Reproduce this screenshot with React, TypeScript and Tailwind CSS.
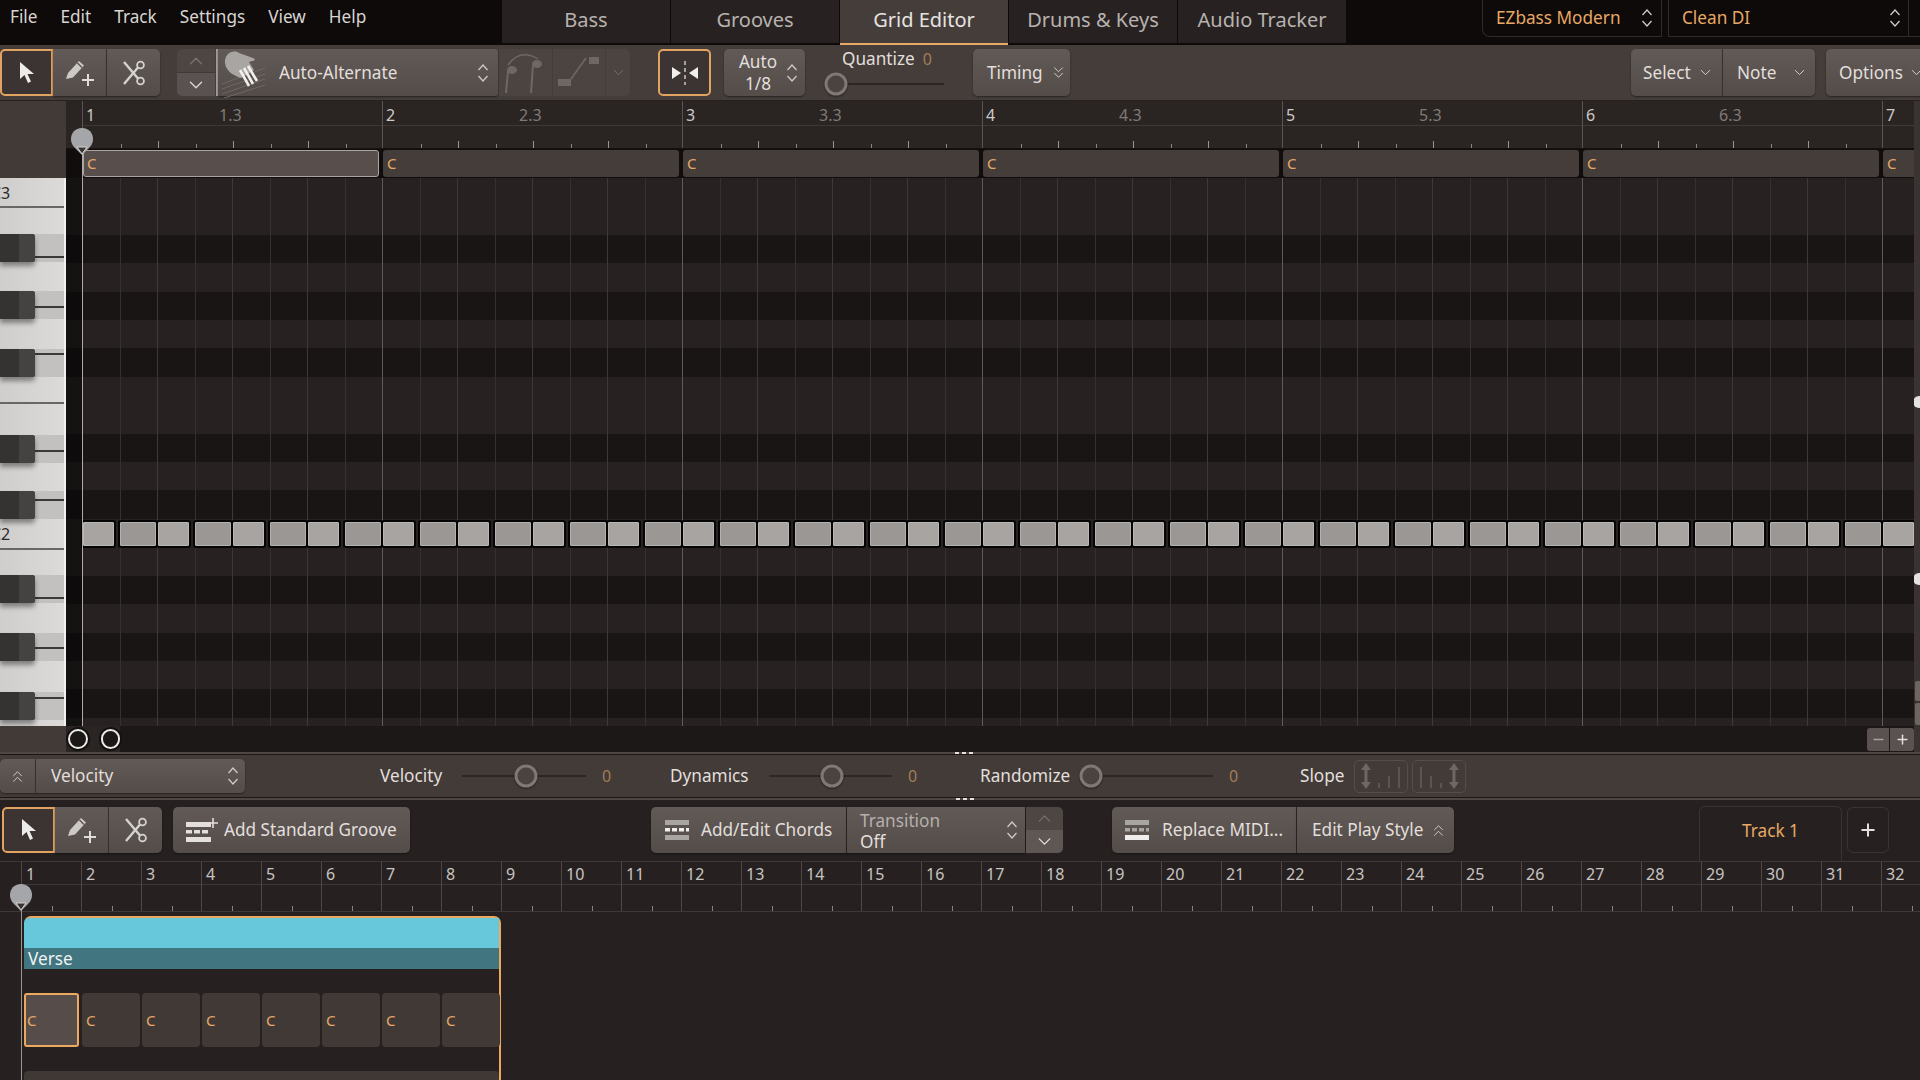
import { ChevronDown, ChevronUp, ChevronsDown, ChevronsUp, Minus, Plus } from "lucide-react";
import React from "react";

const ORANGE = "text-[#e8a866]";
const BTN = "bg-linear-to-b from-[#625a57] to-[#544c49] text-[#e2dfdc] shadow-[0_1px_2px_rgba(0,0,0,0.45)]";

function UpDown({ className = "" }: { className?: string }) {
  return (
    <svg width="12" height="20" viewBox="0 0 12 20" fill="none" stroke="#cfcac7" strokeWidth="1.3" className={className}>
      <path d="M1.5 7 L6 2 L10.5 7" />
      <path d="M1.5 13 L6 18 L10.5 13" />
    </svg>
  );
}

function Arrow() {
  return (
    <svg width="18" height="24" viewBox="0 0 18 24" fill="#eeeceb">
      <path d="M2 1 L2 18 L6.5 14 L10 22 L13 20.5 L9.5 13 L16 13 Z" />
    </svg>
  );
}

function PencilPlus() {
  return (
    <svg width="30" height="28" viewBox="0 0 30 28" fill="none">
      <path d="M1 20 L3 14 L14 2 L19 6.5 L8 18.5 Z" fill="#cdc9c6" />
      <path d="M12.5 4 L17 8.5" stroke="#5a5250" strokeWidth="1.2" />
      <path d="M23 15 V27 M17 21 H29" stroke="#e0dcd9" strokeWidth="2" />
    </svg>
  );
}

function ScissorsIcon() {
  return (
    <svg width="24" height="26" viewBox="0 0 24 26" fill="none" stroke="#d6d2cf" strokeWidth="2.4">
      <circle cx="18.5" cy="5" r="3.4" strokeWidth="1.8" />
      <circle cx="18.5" cy="21" r="3.4" strokeWidth="1.8" />
      <path d="M16 7.5 L2 24" />
      <path d="M16 18.5 L2 2" />
    </svg>
  );
}

function Hand() {
  return (
    <svg width="46" height="50" viewBox="0 0 46 50" fill="none">
      <g stroke="#6f6865" strokeWidth="1">
        <path d="M1 36 L44 20" />
        <path d="M1 41 L44 26" />
        <path d="M1 46 L44 31" />
        <path d="M3 50 L44 37" />
      </g>
      <path d="M4 15 C3 6 12 1 18 5 L32 10 C35 11 34 13 31 13 L28 14 L33 22 L20 30 C14 28 5 24 4 15 Z" fill="#a9a5a2" />
      <path d="M19 22 L28 38 M23 20 L32 36 M27 18 L36 33" stroke="#f2f0ee" strokeWidth="2.6" />
    </svg>
  );
}

function NotesIcon() {
  return (
    <svg width="44" height="44" viewBox="0 0 44 44" fill="none" stroke="#6e6764">
      <path d="M4 14 Q16 -3 34 8" strokeWidth="1.4" />
      <ellipse cx="8" cy="19" rx="5" ry="4" fill="#6e6764" stroke="none" />
      <path d="M4 20 L2 42" strokeWidth="2" />
      <ellipse cx="33" cy="13" rx="5" ry="4" fill="#6e6764" stroke="none" />
      <path d="M29 14 L27 42" strokeWidth="2" />
    </svg>
  );
}

function SlideIcon() {
  return (
    <svg width="44" height="36" viewBox="0 0 44 36" fill="none">
      <rect x="1" y="24" width="13" height="7" fill="#6e6764" />
      <path d="M14 24 L29 3" stroke="#6e6764" strokeWidth="1.6" />
      <rect x="32" y="2" width="10" height="7" fill="#6e6764" />
    </svg>
  );
}

function Mirror() {
  return (
    <svg width="28" height="24" viewBox="0 0 28 24" fill="#f1efed">
      <path d="M1 6 L10 12 L1 18 Z" />
      <path d="M27 6 L18 12 L27 18 Z" />
      <path d="M14 0 V4 M14 7 V11 M14 14 V18 M14 21 V24" stroke="#f1efed" strokeWidth="1.2" />
    </svg>
  );
}

function ChordGlyph({ mid, top, bottom }: { mid: string; top: string; bottom: string }) {
  return (
    <svg width="24" height="20" viewBox="0 0 24 20" className="shrink-0">
      <rect x="0" y="0" width="24" height="5" fill={top} />
      <rect x="0" y="8" width="5" height="3.5" fill={mid} />
      <rect x="7" y="8" width="5" height="3.5" fill={mid} />
      <rect x="14" y="8" width="5" height="3.5" fill={mid} />
      <rect x="21" y="8" width="3" height="3.5" fill={mid} />
      <rect x="0" y="15" width="24" height="5" fill={bottom} />
    </svg>
  );
}

function SlopeIcon({ flip }: { flip?: boolean }) {
  return (
    <svg width="46" height="28" viewBox="0 0 46 28" fill="none" style={{ transform: flip ? "scaleX(-1)" : undefined }}>
      <path d="M8 1 L13 8 H9.5 V20 H13 L8 27 L3 20 H6.5 V8 H3 Z" fill="#6e6764" />
      <path d="M21 21 V26 M31 14 V26 M41 5 V26" stroke="#6e6764" strokeWidth="1.2" />
    </svg>
  );
}

function Tools() {
  return (
    <>
      <div className="flex h-full w-[53px] items-center justify-center rounded-l-[5px] border-2 border-[#e0a362] bg-[#3b3432]">
        <Arrow />
      </div>
      <div className={`flex h-full w-[54px] items-center justify-center border-r border-[#3f3835] ${BTN}`}>
        <PencilPlus />
      </div>
      <div className={`flex h-full w-[53px] items-center justify-center rounded-r-[5px] ${BTN}`}>
        <ScissorsIcon />
      </div>
    </>
  );
}

function Knob({ left }: { left: number }) {
  return (
    <div
      className="absolute top-1/2 h-[23px] w-[23px] -translate-x-1/2 -translate-y-1/2 rounded-full border-[3px] border-[#7f7976] bg-[#4b4340] shadow-[0_1px_2px_rgba(0,0,0,0.5)]"
      style={{ left }}
    />
  );
}

function SliderField({ label, labelW, ml, trackW, knob }: { label: string; labelW: number; ml: number; trackW: number; knob: number }) {
  return (
    <div className="flex shrink-0 items-center" style={{ marginLeft: ml }}>
      <span className="text-[17.2px] text-[#e2dfdc]" style={{ width: labelW }}>{label}</span>
      <div className="relative h-[2px] bg-[#2c2624]" style={{ width: trackW }}>
        <Knob left={knob} />
      </div>
      <span className="ml-[16px] w-[13px] text-[16px] text-[#a07e55]">0</span>
    </div>
  );
}

function MenuBar() {
  return (
    <div className="flex h-[45px] shrink-0 bg-[#0e0a09] [&>*]:shrink-0">
      <div className="flex h-[34px] w-[502px] items-center gap-[23px] pl-[10px] text-[17.2px] text-[#d8d5d2]">
        {["File", "Edit", "Track", "Settings", "View", "Help"].map((m) => (
          <span key={m}>{m}</span>
        ))}
      </div>
      {["Bass", "Grooves", "Grid Editor", "Drums & Keys", "Audio Tracker"].map((t) => (
        <div
          key={t}
          className={
            t === "Grid Editor"
              ? "mr-[1px] flex h-[45px] w-[168px] items-center justify-center border-b-2 border-[#e8a866] bg-[#453d3a] pb-[3px] text-[20px] text-[#e6e3e0]"
              : "mr-[1px] flex h-[43px] w-[168px] items-center justify-center bg-[#272221] pb-[3px] text-[20px] text-[#b7b2af]"
          }
        >
          {t}
        </div>
      ))}
      <div className={`ml-[135px] flex h-[37px] w-[180px] items-center justify-between rounded-bl-[8px] border-r border-b border-l border-[#302b29] pr-[8px] pl-[13px] text-[17.2px] ${ORANGE}`}>
        EZbass Modern
        <UpDown />
      </div>
      <div className={`ml-[6px] flex h-[37px] w-[241px] items-center justify-between border-r border-b border-l border-[#302b29] pr-[7px] pl-[13px] text-[17.2px] ${ORANGE}`}>
        Clean DI
        <UpDown />
      </div>
      <div className="h-[37px] flex-1 border-b border-[#302b29]" />
    </div>
  );
}

function Toolbar() {
  return (
    <div className="flex h-[56px] shrink-0 items-start overflow-hidden border-b border-[#26211f] bg-[#453d3a] pt-[4px] [&>*]:shrink-0">
      <div className="flex h-[47px]"><Tools /></div>
      <div className="ml-[17px] flex h-[47px] w-[38px] flex-col overflow-hidden rounded-l-[5px]">
        <div className="flex h-[24px] items-center justify-center border-b border-[#3f3835] bg-[#4e4643]"><ChevronUp size={22} strokeWidth={1.3} color="#7a7370" /></div>
        <div className="flex flex-1 items-center justify-center bg-[#5a5250]"><ChevronDown size={22} strokeWidth={1.6} color="#d5d1ce" /></div>
      </div>
      <div className="ml-[1px] h-[47px] w-[2px] bg-[#a5a09d]" />
      <div className={`flex h-[47px] w-[280px] items-center rounded-r-[3px] pl-[3px] pr-[9px] ${BTN}`}>
        <Hand />
        <span className="ml-[12px] flex-1 text-[17.2px]">Auto-Alternate</span>
        <UpDown />
      </div>
      <div className="ml-[1px] flex h-[47px] w-[53px] items-center justify-center bg-[#4c4441]"><NotesIcon /></div>
      <div className="ml-[1px] flex h-[47px] w-[52px] items-center justify-center bg-[#4c4441]"><SlideIcon /></div>
      <div className="ml-[1px] flex h-[47px] w-[24px] items-center justify-center rounded-r-[5px] bg-[#4c4441]"><ChevronDown size={17} strokeWidth={1.3} color="#7a7370" /></div>
      <div className="ml-[28px] flex h-[47px] w-[53px] items-center justify-center rounded-[5px] border-2 border-[#e0a362] bg-[#3b3432]"><Mirror /></div>
      <div className={`ml-[13px] flex h-[47px] w-[81px] items-center rounded-[5px] pl-[7px] ${BTN}`}>
        <div className="w-[54px] text-center text-[17.2px] leading-[22px]">Auto<br />1/8</div>
        <UpDown className="ml-[1px]" />
      </div>
      <div className="ml-[20px] flex h-[47px] w-[148px] flex-col">
        <div className="flex h-[19px] items-center pl-[17px] text-[17.2px] text-[#e2dfdc]">Quantize<span className="ml-[8px] text-[16px] text-[#a07e55]">0</span></div>
        <div className="relative mt-[15px] ml-[11px] h-[2px] w-[108px] bg-[#2c2624]"><Knob left={0} /></div>
      </div>
      <div className={`flex h-[47px] w-[97px] items-center rounded-[5px] pl-[14px] text-[17.2px] ${BTN}`}>
        Timing
        <ChevronsDown size={19} strokeWidth={1.2} className="ml-[6px]" color="#d5d1ce" />
      </div>
      <div className={`ml-[561px] flex h-[47px] w-[92px] items-center justify-between rounded-l-[5px] border-r border-[#3f3835] pr-[8px] pl-[12px] text-[17.2px] ${BTN}`}>
        Select
        <ChevronDown size={17} strokeWidth={1.4} color="#d5d1ce" />
      </div>
      <div className={`flex h-[47px] w-[92px] items-center justify-between rounded-r-[5px] pr-[7px] pl-[14px] text-[17.2px] ${BTN}`}>
        Note
        <ChevronDown size={17} strokeWidth={1.4} color="#d5d1ce" />
      </div>
      <div className={`ml-[11px] flex h-[47px] w-[104px] items-center justify-between rounded-l-[5px] pr-[5px] pl-[13px] text-[17.2px] ${BTN}`}>
        Options
        <ChevronDown size={17} strokeWidth={1.4} color="#d5d1ce" />
      </div>
    </div>
  );
}

// white keys of one octave, sharps drawn on top
const BLACK_TOPS = [56, 113, 171, 257, 313, 397, 455, 514];
const KEY_LINES = [28, 78, 128, 175, 224, 272, 321, 370, 419, 469, 519];

function Piano() {
  return (
    <div className="relative h-[548px] w-[66px] overflow-hidden bg-linear-to-r from-[#cfcecd] to-[#dcdbda]">
      {BLACK_TOPS.map((t) => (
        <div key={t} className="absolute left-0 h-[28px] w-[64px] bg-[#c2c1c0]" style={{ top: t }} />
      ))}
      {KEY_LINES.map((y, i) => (
        <div
          key={y}
          className={i === 0 || i === 4 || i === 7 ? "absolute left-0 h-[2px] w-[66px] rounded-l-none bg-[#6a6665]" : "absolute left-[30px] h-[1.5px] w-[36px] bg-[#3c3837]"}
          style={{ top: y }}
        />
      ))}
      <div className="absolute top-0 right-0 h-full w-[2px] bg-[#f1f1f0]" />
      {BLACK_TOPS.map((t) => (
        <div
          key={t}
          className="absolute left-0 flex h-[28px] w-[35px] rounded-r-[3px] bg-[#353332] shadow-[0_4px_5px_rgba(0,0,0,0.4)]"
          style={{ top: t }}
        >
          <div className="ml-auto h-full w-[16px] rounded-r-[3px] bg-[#454342]" />
        </div>
      ))}
      <span className="absolute top-[3px] left-[-9px] text-[16px] text-[#2c2a29]">C3</span>
      <span className="absolute top-[344px] left-[-9px] text-[16px] text-[#2c2a29]">C2</span>
    </div>
  );
}

function Ruler() {
  return (
    <div className="flex h-[48px] overflow-hidden border-b border-[#151110] bg-[#2a2523] pl-[16px]">
      {[1, 2, 3, 4, 5, 6, 7].map((bar) => (
        <div key={bar} className="w-[300px] shrink-0 border-l border-[#5a5452]">
          <div className="flex h-[25px] items-center border-b border-[#3e3836] pt-[4px] pl-[3px] text-[16px]">
            <span className="w-[133px] text-[#cdc9c6]">{bar}</span>
            {bar < 7 && <span className="text-[#7f7976]">{bar}.3</span>}
          </div>
          <div className="flex h-[22px] items-end">
            {[0, 1, 2, 3, 4, 5, 6, 7].map((i) => (
              <div key={i} className="relative h-full w-[37.5px] shrink-0">
                {i > 0 && (
                  <div className={i % 2 === 0 ? "absolute bottom-0 left-0 h-[7px] w-[1px] bg-[#9a9491]" : "absolute bottom-0 left-0 h-[4px] w-[1px] bg-[#8a8481]"} />
                )}
              </div>
            ))}
          </div>
        </div>
      ))}
    </div>
  );
}

function ChordStrip() {
  return (
    <div className="flex h-[29px] overflow-hidden bg-[#100d0c] pt-[1px] pl-[17px]">
      {[0, 1, 2, 3, 4, 5, 6].map((i) => (
        <div
          key={i}
          className={
            i === 0
              ? "mr-[4px] flex h-[27px] w-[296px] shrink-0 items-center rounded-[3px] border border-[#a9a4a0] bg-[#584f4c] pl-[3px] text-[15px] text-[#e8a866]"
              : "mr-[4px] flex h-[27px] w-[296px] shrink-0 items-center rounded-[3px] bg-[#453d3a] pl-[4px] text-[15px] text-[#e8a866]"
          }
        >
          C
        </div>
      ))}
    </div>
  );
}

function GridArea() {
  const rows = Array.from({ length: 20 }, (_, i) => i);
  const darkRows = [2, 4, 6, 9, 11, 14, 16, 18];
  const notes = Array.from({ length: 49 }, (_, k) => k);
  return (
    <div className="relative h-[548px] overflow-hidden">
      <div className="flex flex-col">
        {rows.map((r) => (
          <div
            key={r}
            className={darkRows.includes(r) ? "h-[28.42px] shrink-0 bg-[#181514]" : "h-[28.42px] shrink-0 bg-[#272221]"}
          />
        ))}
      </div>
      <div className="absolute inset-0 flex pl-[16px]">
        {Array.from({ length: 50 }, (_, i) => i).map((i) => (
          <div
            key={i}
            className={i % 8 === 0 ? "h-full w-[37.5px] shrink-0 border-l border-[#5f5957]" : i % 2 === 0 ? "h-full w-[37.5px] shrink-0 border-l border-[#3e3937]" : "h-full w-[37.5px] shrink-0 border-l border-[#353130]"}
          />
        ))}
      </div>
      <div className="absolute top-0 left-0 h-full w-[16px] bg-black/45" />
      {notes.map((k) => (
        <div
          key={k}
          className={
            k % 2 === 0
              ? "absolute top-[344px] h-[24px] rounded-[1px] border border-[#bab7b5] bg-[#a8a4a2] shadow-[0_0_0_2px_#060505]"
              : "absolute top-[344px] h-[24px] rounded-[1px] border border-[#b3b0ae] bg-[#9b9795] shadow-[0_0_0_2px_#060505]"
          }
          style={{ left: 16 + 37.5 * k + (k % 2 === 0 ? 1 : 0), width: k % 2 === 0 ? 31 : 36 }}
        />
      ))}
    </div>
  );
}

function Playhead() {
  return (
    <svg width="24" height="29" viewBox="0 0 24 29" className="absolute">
      <path d="M12 1 C5 1 1 6 1 12 C1 17 4 20 6 22 L12 28 L18 22 C20 20 23 17 23 12 C23 6 19 1 12 1 Z" fill="#a4a6a9" />
      <path d="M7 20 H17 L12 27 Z" fill="#3a3533" stroke="#d6d3d1" strokeWidth="1" />
    </svg>
  );
}

function Editor() {
  return (
    <div className="flex h-[651px] shrink-0">
      <div className="flex w-[66px] shrink-0 flex-col">
        <div className="h-[77px] bg-[#423a37]" />
        <Piano />
        <div className="flex-1 bg-[#423a37]" />
      </div>
      <div className="relative w-[1848px] shrink-0">
        <Ruler />
        <ChordStrip />
        <GridArea />
        <div className="flex h-[26px] items-center bg-[#1c1817]">
          <div className="flex h-[26px] w-[54px] items-center bg-[#2a2523] pl-[2px]">
            <div className="h-[20px] w-[20px] rounded-full border-[2.5px] border-[#ecebea] bg-[#1c1817] shadow-[0_0_0_2px_#141110]" />
            <div className="ml-[13px] h-[20px] w-[20px] rounded-full border-[2.5px] border-[#ecebea] bg-[#1c1817] shadow-[0_0_0_2px_#141110]" />
          </div>
          <div className="ml-auto flex h-[23px] w-[47px] overflow-hidden rounded-[3px]">
            <div className="flex w-[23px] items-center justify-center border-r border-[#1c1817] bg-[#5a5250]"><Minus size={15} strokeWidth={2.4} color="#a9a4a1" /></div>
            <div className="flex flex-1 items-center justify-center bg-[#5a5250]"><Plus size={15} strokeWidth={2.4} color="#e2dfdc" /></div>
          </div>
        </div>
        <div className="pointer-events-none absolute top-[48px] left-[15.5px] h-[577px] w-[1.5px] bg-[#b0aba9]" />
        <div className="absolute top-[26px] left-[4px] h-[29px] w-[24px]"><Playhead /></div>
      </div>
      <div className="relative flex-1 overflow-hidden bg-[#3a3331]">
        <div className="absolute top-[295px] left-[-1px] h-[12px] w-[12px] rounded-full bg-[#e4e2e0]" />
        <div className="absolute top-[472px] left-[-1px] h-[12px] w-[12px] rounded-full bg-[#e4e2e0]" />
        <div className="absolute top-[580px] left-[1px] h-[20px] w-[8px] rounded-l-[2px] bg-[#6d6562]" />
        <div className="absolute top-[602px] left-[1px] h-[22px] w-[8px] rounded-l-[2px] bg-[#6d6562]" />
      </div>
    </div>
  );
}

function ParamsBar() {
  return (
    <div className="relative flex h-[48px] shrink-0 items-center border-t-2 border-b-2 border-[#4e4744] bg-[#433b38] shadow-[inset_0_1px_0_#1b1716,inset_0_-1px_0_#1b1716]">
      <div className="absolute top-[-2px] left-[955px] h-[2px] w-[18px] bg-[repeating-linear-gradient(90deg,#e2dfdc_0,#e2dfdc_4px,transparent_4px,transparent_7px)]" />
      <div className="absolute bottom-[-2px] left-[956px] h-[2px] w-[18px] bg-[repeating-linear-gradient(90deg,#e2dfdc_0,#e2dfdc_4px,transparent_4px,transparent_7px)]" />
      <div className={`flex h-[34px] w-[36px] shrink-0 items-center justify-center rounded-l-[5px] border-r border-[#3f3835] ${BTN}`}>
        <ChevronsUp size={19} strokeWidth={1.2} color="#d5d1ce" />
      </div>
      <div className={`flex h-[34px] w-[209px] shrink-0 items-center justify-between rounded-r-[5px] pr-[6px] pl-[15px] text-[17.2px] ${BTN}`}>
        Velocity
        <UpDown />
      </div>
      <SliderField label="Velocity" labelW={82} ml={135} trackW={124} knob={64} />
      <SliderField label="Dynamics" labelW={99} ml={55} trackW={123} knob={63} />
      <SliderField label="Randomize" labelW={100} ml={59} trackW={133} knob={11} />
      <span className="ml-[58px] w-[54px] shrink-0 text-[17.2px] text-[#e2dfdc]">Slope</span>
      <div className="flex h-[33px] w-[54px] shrink-0 items-center justify-center rounded-[5px] border border-[#554d4a]"><SlopeIcon /></div>
      <div className="ml-[4px] flex h-[33px] w-[54px] shrink-0 items-center justify-center rounded-[5px] border border-[#554d4a]"><SlopeIcon flip /></div>
    </div>
  );
}

function LowerToolbar() {
  return (
    <div className="flex h-[61px] shrink-0 items-start pt-[7px] [&>*]:shrink-0">
      <div className="ml-[2px] flex h-[46px]"><Tools /></div>
      <div className={`ml-[11px] flex h-[46px] w-[237px] items-center rounded-[5px] pl-[13px] text-[17.2px] ${BTN}`}>
        <div className="relative h-[24px] w-[30px] shrink-0">
          <svg width="32" height="24" viewBox="0 0 32 24">
            <rect x="0" y="4" width="25" height="5" fill="#e2dfdc" />
            <rect x="0" y="12" width="6" height="3.5" fill="#e2dfdc" />
            <rect x="8" y="12" width="6" height="3.5" fill="#e2dfdc" />
            <rect x="16" y="12" width="6" height="3.5" fill="#e2dfdc" />
            <rect x="0" y="19" width="25" height="5" fill="#e2dfdc" />
            <path d="M27 0 V10 M22 5 H32" stroke="#e2dfdc" strokeWidth="1.6" />
          </svg>
        </div>
        <span className="ml-[8px]">Add Standard Groove</span>
      </div>
      <div className={`ml-[241px] flex h-[46px] w-[196px] items-center rounded-l-[5px] border-r border-[#2e2826] pl-[14px] text-[17.2px] ${BTN}`}>
        <ChordGlyph top="#a9a5a2" mid="#f0eeec" bottom="#a9a5a2" />
        <span className="ml-[12px]">Add/Edit Chords</span>
      </div>
      <div className={`flex h-[46px] w-[178px] items-center justify-between pr-[7px] pl-[13px] text-[17.2px] ${BTN}`}>
        <div className="pt-[2px] leading-[21px]"><div className="text-[#b5b0ad]">Transition</div><div>Off</div></div>
        <UpDown />
      </div>
      <div className="ml-[1px] flex h-[46px] w-[37px] flex-col overflow-hidden rounded-r-[5px]">
        <div className="flex h-[23px] items-center justify-center bg-[#4e4643]"><ChevronUp size={21} strokeWidth={1.3} color="#7a7370" /></div>
        <div className="flex flex-1 items-center justify-center bg-[#5f5754]"><ChevronDown size={21} strokeWidth={1.6} color="#e2dfdc" /></div>
      </div>
      <div className={`ml-[49px] flex h-[46px] w-[185px] items-center rounded-l-[5px] border-r border-[#2e2826] pl-[13px] text-[17.2px] ${BTN}`}>
        <ChordGlyph top="#a9a5a2" mid="#a9a5a2" bottom="#f0eeec" />
        <span className="ml-[13px]">Replace MIDI...</span>
      </div>
      <div className={`flex h-[46px] w-[157px] items-center rounded-r-[5px] pl-[15px] text-[17.2px] ${BTN}`}>
        Edit Play Style
        <ChevronsUp size={19} strokeWidth={1.2} className="ml-[6px]" color="#d5d1ce" />
      </div>
      <div className={`ml-[245px] -mt-[1px] flex h-[55px] w-[143px] items-center justify-center rounded-t-[6px] border-t border-r border-l border-[#3a3431] pb-[7px] text-[17.2px] ${ORANGE}`}>
        Track 1
      </div>
      <div className="ml-[5px] flex h-[46px] w-[42px] items-center justify-center rounded-[6px] border border-[#3a3431]">
        <Plus size={20} strokeWidth={2.4} color="#e2dfdc" />
      </div>
    </div>
  );
}

function Arrangement() {
  const bars = Array.from({ length: 32 }, (_, i) => i + 1);
  const chords = [0, 1, 2, 3, 4, 5, 6, 7];
  return (
    <div className="relative min-h-0 flex-1 overflow-hidden">
      <div className="flex h-[51px] border-t border-b border-[#3e3836] pl-[21px]">
        {bars.map((b) => (
          <div key={b} className="w-[60px] shrink-0 border-l border-[#4e4846]">
            <div className="flex h-[23px] items-center border-b border-[#3e3836] pt-[1px] pl-[4px] text-[16px] text-[#c8c4c1]">{b}</div>
            <div className="relative h-[26px]">
              <div className="absolute bottom-0 left-[30px] h-[5px] w-[1px] bg-[#8a8481]" />
            </div>
          </div>
        ))}
      </div>
      <div className="ml-[24px] mt-[4px] w-[477px] rounded-t-[7px] border-t-2 border-r-2 border-[#eba95f]">
        <div className="h-[30px] rounded-tl-[5px] bg-[#67c8db]" />
        <div className="flex h-[21px] items-center bg-[#41757f] pl-[4px] text-[17.2px] text-[#eef3f3]">Verse</div>
        <div className="flex pt-[24px] pb-[24px]">
          {chords.map((c) => (
            <div
              key={c}
              className={
                c === 0
                  ? "mr-[3px] flex h-[54px] w-[55px] shrink-0 items-center rounded-[3px] border-2 border-[#eba95f] bg-[#564d4a] pl-[1px] text-[15px] text-[#e8a866]"
                  : "mr-[2px] flex h-[54px] w-[58px] shrink-0 items-center rounded-[4px] bg-[#413936] pl-[4px] text-[15px] text-[#e8a866]"
              }
            >
              C
            </div>
          ))}
        </div>
        <div className="h-[20px] rounded-t-[4px] bg-[#3f3835]" />
      </div>
      <div className="absolute top-[49px] left-[20.5px] h-[180px] w-[1.5px] bg-[#9b9693]" />
      <div className="absolute top-[22px] left-[9px] h-[29px] w-[24px]"><Playhead /></div>
    </div>
  );
}

export default function App() {
  return (
    <div className="flex h-[1080px] w-[1920px] flex-col overflow-hidden bg-[#262120] font-['Noto_Sans',sans-serif]">
      <MenuBar />
      <Toolbar />
      <Editor />
      <ParamsBar />
      <LowerToolbar />
      <Arrangement />
    </div>
  );
}
